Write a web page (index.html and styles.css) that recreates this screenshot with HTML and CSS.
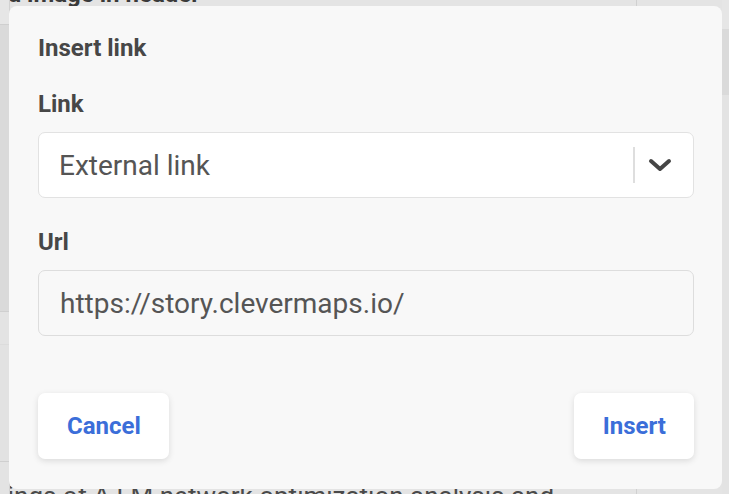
FILE: index.html
```html
<!DOCTYPE html>
<html lang="en">
<head>
  <meta charset="UTF-8" />
  <meta name="viewport" content="width=device-width, initial-scale=1.0" />
  <title>Insert link</title>
  <link rel="stylesheet" href="styles.css">
</head>
<body>
  <div class="page">
    <div class="side side-left">
      <div class="side-block top"></div>
      <div class="side-block dark"></div>
      <div class="side-block mid"></div>
      <div class="side-block light"></div>
      <div class="side-block mid"></div>
    </div>
    <div class="page-main">
      <h1 class="page-title">Add image in header</h1>
      <p class="page-text">Findings of A LM network optimization analysis and</p>
    </div>
    <div class="side side-right">
      <div class="side-block top"></div>
      <div class="side-block dark short"></div>
      <div class="side-block mid"></div>
    </div>
  </div>

  <div class="dialog">
    <h2 class="dialog-title">Insert link</h2>

    <label class="field-label">Link</label>
    <div class="select">
      <span class="select-value">External link</span>
      <span class="select-sep"></span>
      <span class="select-arrow">
        <svg width="24" height="14" viewBox="0 0 24 14">
          <path d="M3 3 L12 11 L21 3" fill="none" stroke="#454545" stroke-width="4" stroke-linecap="round" stroke-linejoin="round"/>
        </svg>
      </span>
    </div>

    <label class="field-label">Url</label>
    <input class="text-input" type="text" value="https://story.clevermaps.io/" />

    <div class="dialog-actions">
      <button class="btn">Cancel</button>
      <button class="btn">Insert</button>
    </div>
  </div>
</body>
</html>
```

FILE: styles.css
```css
html, body {
  margin: 0;
  height: 100%;
  overflow: hidden;
}

body {
  font-family: Roboto, "Liberation Sans", sans-serif;
  background: #e4e4e4;
}

/* page behind the modal, dimmed */
.page {
  display: flex;
  height: 494px;
}

.side {
  width: 9px;
  display: flex;
  flex-direction: column;
}

.side-left {
  border-right: 1px solid #d2d2d2;
}

.side-block.top {
  height: 24px;
  background: #e6e6e6;
  border-bottom: 1px solid #cfcfcf;
}

.side-block.dark {
  height: 286px;
  background: #dadada;
  border-bottom: 1px solid #cfcfcf;
}

.side-right .side-block.top {
  height: 29px;
  border-bottom: none;
}

.side-block.dark.short {
  height: 66px;
  border-bottom: none;
}

.side-block.mid {
  flex: 1;
  background: #e3e3e3;
}

.side-block.light {
  height: 116px;
  background: #e2e2e2;
  border-top: 1px solid #dcdcdc;
  border-bottom: 1px solid #cfcfcf;
}

.side-right {
  width: 7px;
  margin-left: auto;
}

.page-main {
  flex: 1;
  display: flex;
  flex-direction: column;
  justify-content: space-between;
  border-right: 1px solid #d0d0d0;
  margin-right: 85px;
  overflow: hidden;
}

.page-title {
  margin: -20px 0 0 -32px;
  font-size: 24px;
  font-weight: 700;
  color: #3a3a3a;
  white-space: nowrap;
}

.page-text {
  margin: 0 0 -17px -52px;
  font-size: 26px;
  line-height: 30px;
  color: #4a4a4a;
  white-space: nowrap;
}

/* modal */
.dialog {
  position: fixed;
  left: 9px;
  top: 6px;
  width: 713px;
  height: 483px;
  box-sizing: border-box;
  padding: 28px 28px 30px 29px;
  background: #f8f8f8;
  border-radius: 8px;
  display: flex;
  flex-direction: column;
}

.dialog-title,
.field-label {
  margin: 0;
  font-size: 24px;
  line-height: 28px;
  font-weight: 700;
  color: #474747;
}

.dialog-title {
  margin-bottom: 28px;
}

.field-label {
  display: block;
  margin-bottom: 14px;
}

.select {
  height: 66px;
  box-sizing: border-box;
  display: flex;
  align-items: center;
  background: #fff;
  border: 1px solid #e2e2e2;
  border-radius: 7px;
  padding-left: 20px;
  margin-bottom: 30px;
}

.select-value {
  flex: 1;
  font-size: 28px;
  color: #555;
}

.select-sep {
  width: 2px;
  height: 36px;
  background: #dedede;
}

.select-arrow {
  width: 50px;
  margin-right: 8px;
  display: flex;
  justify-content: center;
}

.text-input {
  height: 66px;
  box-sizing: border-box;
  background: #f8f8f8;
  border: 1px solid #dddddd;
  border-radius: 7px;
  padding: 0 21px;
  font-family: inherit;
  font-size: 28px;
  color: #555;
  outline: none;
}

.dialog-actions {
  margin-top: auto;
  display: flex;
  justify-content: space-between;
}

.btn {
  height: 66px;
  padding: 0 28px 0 29px;
  background: #fff;
  border: none;
  border-radius: 7px;
  box-shadow: 0 2px 6px rgba(0, 0, 0, 0.12);
  font-family: inherit;
  font-size: 24px;
  font-weight: 700;
  color: #3b6ed9;
  cursor: pointer;
}
```
